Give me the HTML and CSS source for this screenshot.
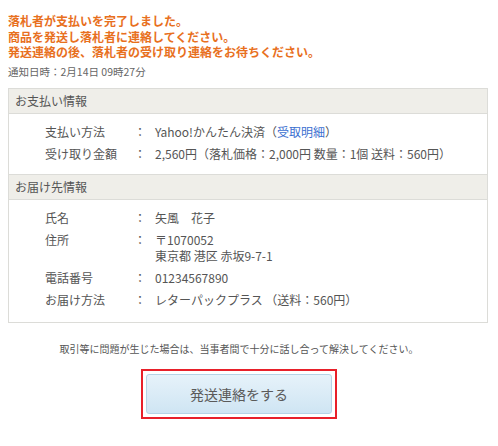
FILE: index.html
```html
<!DOCTYPE html>
<html lang="ja">
<head>
    <meta charset="UTF-8">
    <meta name="viewport" content="width=device-width, initial-scale=1.0">
    <title>落札者の支払い完了</title>
    <link rel="stylesheet" href="styles.css">
</head>
<body>
    <div class="notice">
        <p class="alert">落札者が支払いを完了しました。<br>商品を発送し落札者に連絡してください。<br>発送連絡の後、落札者の受け取り連絡をお待ちください。</p>
        <p class="date">通知日時：2月14日 09時27分</p>
    </div>

    <div class="info-box">
        <h2 class="info-head">お支払い情報</h2>
        <div class="info-body">
            <div class="row">
                <span class="label">支払い方法</span>
                <span class="colon">：</span>
                <span class="value">Yahoo!かんたん決済（<a href="#">受取明細</a>）</span>
            </div>
            <div class="row">
                <span class="label">受け取り金額</span>
                <span class="colon">：</span>
                <span class="value">2,560円（落札価格：2,000円 数量：1個 送料：560円）</span>
            </div>
        </div>

        <h2 class="info-head">お届け先情報</h2>
        <div class="info-body">
            <div class="row">
                <span class="label">氏名</span>
                <span class="colon">：</span>
                <span class="value">矢風　花子</span>
            </div>
            <div class="row">
                <span class="label">住所</span>
                <span class="colon">：</span>
                <span class="value">〒1070052<br>東京都 港区 赤坂9-7-1</span>
            </div>
            <div class="row">
                <span class="label">電話番号</span>
                <span class="colon">：</span>
                <span class="value">01234567890</span>
            </div>
            <div class="row">
                <span class="label">お届け方法</span>
                <span class="colon">：</span>
                <span class="value">レターパックプラス （送料：560円）</span>
            </div>
        </div>
    </div>

    <div class="actions">
        <p class="note">取引等に問題が生じた場合は、当事者間で十分に話し合って解決してください。</p>
        <div class="highlight">
            <button type="button">発送連絡をする</button>
        </div>
    </div>
</body>
</html>
```

FILE: styles.css
```css
body {
    margin: 0;
    padding: 13px 10px 0 8px;
    background-color: #ffffff;
    font-family: 'Noto Sans CJK JP', 'Noto Sans', sans-serif;
    color: #444;
}
p {
    margin: 0;
}
.alert {
    color: #e8701e;
    font-size: 12px;
    font-weight: bold;
    line-height: 15.5px;
}
.date {
    margin-top: 4px;
    font-size: 10.5px;
    line-height: 16px;
    color: #666;
}
.info-box {
    margin-top: 8px;
    border: 1px solid #dcdcd8;
}
.info-head {
    margin: 0;
    padding: 0 6px;
    height: 24px;
    line-height: 24px;
    font-size: 12px;
    font-weight: normal;
    color: #555;
    background-color: #efeee9;
    border-bottom: 1px solid #dcdcd8;
}
.info-body {
    padding: 7px 0 9px 36px;
    border-bottom: 1px solid #dcdcd8;
}
.info-body:last-child {
    border-bottom: none;
    padding-bottom: 11px;
}
.row {
    display: grid;
    grid-template-columns: 89px 21px 1fr;
    padding: 3px 0;
    font-size: 12px;
    line-height: 16px;
    color: #555;
}
.value a {
    color: #3b6fd0;
    text-decoration: none;
}
.actions {
    display: flex;
    flex-direction: column;
    align-items: center;
    padding-right: 18px;
}
.note {
    margin-top: 19px;
    font-size: 10px;
    line-height: 14px;
    color: #555;
}
.highlight {
    margin-top: 13px;
    border: 2px solid #e8202a;
    padding: 3px;
}
button {
    display: block;
    width: 186px;
    height: 40px;
    border: 1px solid #b5d3e6;
    border-radius: 3px;
    background: linear-gradient(#e6f2fa, #cfe5f3);
    font-family: 'Noto Sans CJK JP', 'Noto Sans', sans-serif;
    font-size: 14px;
    color: #5a5a5a;
    cursor: pointer;
}
```
